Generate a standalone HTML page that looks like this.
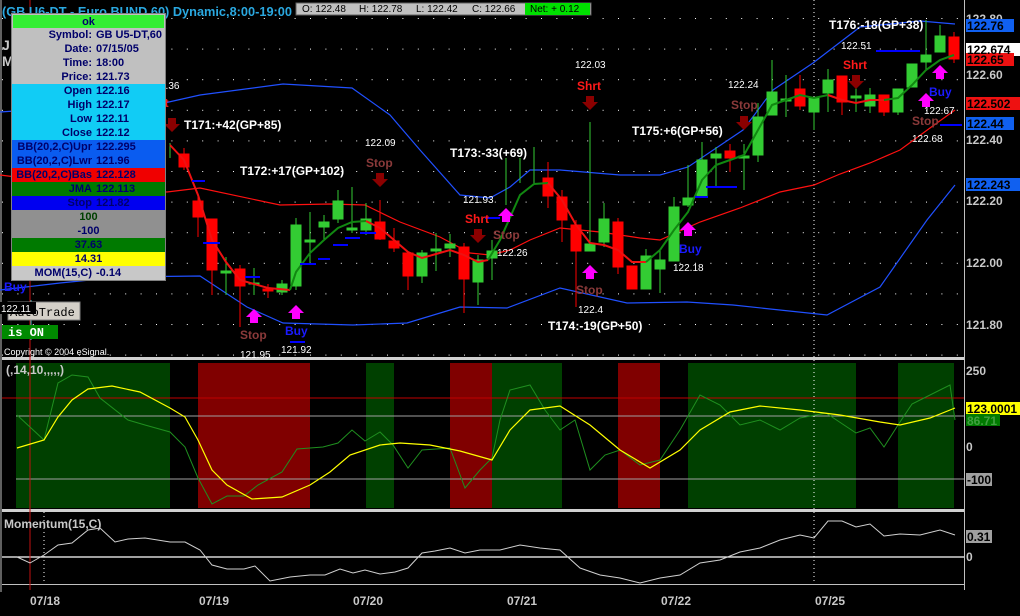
<!DOCTYPE html>
<html><head><meta charset="utf-8"><style>
html,body{margin:0;padding:0;background:#000;}
body{width:1020px;height:616px;position:relative;overflow:hidden;font-family:"Liberation Sans",sans-serif;}
svg{position:absolute;left:0;top:0;}
.box{position:absolute;left:11px;top:13px;width:155px;height:268px;background:#c0c0c0;border:1px solid #808080;box-sizing:border-box;}
.r{height:14px;line-height:14px;font-size:11px;font-weight:bold;color:#00006a;white-space:nowrap;display:flex;}
.r .a{width:80px;text-align:right;padding-right:4px;}
.r .c{width:100%;text-align:center;}
</style></head><body>
<svg width="1020" height="616" viewBox="0 0 1020 616" xmlns="http://www.w3.org/2000/svg" font-family="Liberation Sans, sans-serif">
<defs>
<pattern id="dots" x="2" y="18" width="15.4" height="30.6" patternUnits="userSpaceOnUse"><rect x="0" y="0" width="1" height="1" fill="#fff"/></pattern>
</defs>
<rect x="0" y="0" width="965" height="356" fill="url(#dots)"/>
<rect x="0" y="0" width="2" height="592" fill="#606060"/>
<rect x="964" y="0" width="1" height="590" fill="#c0c0c0"/>
<rect x="2" y="357" width="962" height="3" fill="#d0d0d0"/>
<rect x="2" y="509" width="962" height="3" fill="#d0d0d0"/>
<rect x="2" y="584" width="962" height="1" fill="#c0c0c0"/>
<rect x="16" y="363" width="154" height="145" fill="#004000"/>
<rect x="198" y="363" width="112" height="145" fill="#800000"/>
<rect x="366" y="363" width="28" height="145" fill="#004000"/>
<rect x="450" y="363" width="42" height="145" fill="#800000"/>
<rect x="492" y="363" width="70" height="145" fill="#004000"/>
<rect x="618" y="363" width="42" height="145" fill="#800000"/>
<rect x="688" y="363" width="168" height="145" fill="#004000"/>
<rect x="898" y="363" width="56" height="145" fill="#004000"/>
<line x1="2" y1="398" x2="964" y2="398" stroke="#c00000" stroke-width="1"/>
<line x1="16" y1="416" x2="964" y2="416" stroke="#a0a0a0" stroke-width="1"/>
<line x1="16" y1="479" x2="964" y2="479" stroke="#a0a0a0" stroke-width="1"/>
<line x1="2" y1="557" x2="964" y2="557" stroke="#fff" stroke-width="1.2"/>
<line x1="44" y1="512" x2="44" y2="584" stroke="#fff" stroke-dasharray="1,3"/>
<line x1="814" y1="0" x2="814" y2="584" stroke="#fff" stroke-dasharray="1,3"/>
<polyline fill="none" stroke="#2050ff" stroke-width="1.2" points="0,112 60,108 120,104 160,104 200,95 283,84 352,88 390,115 420,150 460,195 490,198 510,187 530,170 560,170 620,175 660,175 688,167 743,130 773,90 813,63 860,27 920,21 955,24"/>
<polyline fill="none" stroke="#ff1010" stroke-width="1.2" points="0,175 80,185 167,192 200,188 280,205 330,204 365,205 400,222 440,237 470,253 490,255 510,250 530,240 560,228 600,232 640,238 660,240 700,222 740,208 780,192 814,185 840,174 870,163 900,150 930,128 955,110"/>
<polyline fill="none" stroke="#2050ff" stroke-width="1.2" points="0,290 60,283 120,277 200,276 247,307 283,323 353,325 407,323 460,307 507,308 560,288 627,303 687,302 733,305 827,315 880,287 927,220 955,185"/>
<g stroke-width="1">
<g fill="#33cc33" stroke="#33cc33">
<line x1="170" y1="143" x2="170" y2="158"/>
<line x1="226" y1="257" x2="226" y2="295"/><rect x="221" y="271" width="10" height="2"/>
<line x1="254" y1="268" x2="254" y2="295"/><rect x="249" y="283" width="10" height="1"/>
<line x1="282" y1="280" x2="282" y2="295"/><rect x="277" y="284" width="10" height="8"/>
<line x1="296" y1="218" x2="296" y2="290"/><rect x="291" y="225" width="10" height="61"/>
<line x1="310" y1="212" x2="310" y2="263"/><rect x="305" y="240" width="10" height="2"/>
<line x1="324" y1="215" x2="324" y2="240"/><rect x="319" y="222" width="10" height="5"/>
<line x1="338" y1="190" x2="338" y2="223"/><rect x="333" y="201" width="10" height="18"/>
<line x1="352" y1="187" x2="352" y2="233"/><rect x="347" y="228" width="10" height="2"/>
<line x1="366" y1="203" x2="366" y2="235"/><rect x="361" y="219" width="10" height="11"/>
<line x1="422" y1="250" x2="422" y2="283"/><rect x="417" y="253" width="10" height="23"/>
<line x1="436" y1="233" x2="436" y2="271"/><rect x="431" y="249" width="10" height="2"/>
<line x1="450" y1="234" x2="450" y2="257"/><rect x="445" y="244" width="10" height="4"/>
<line x1="478" y1="255" x2="478" y2="305"/><rect x="473" y="260" width="10" height="22"/>
<line x1="492" y1="240" x2="492" y2="280"/><rect x="487" y="251" width="10" height="7"/>
<line x1="506" y1="158" x2="506" y2="205"/>
<line x1="520" y1="158" x2="520" y2="183"/>
<line x1="534" y1="147" x2="534" y2="183"/>
<line x1="590" y1="122" x2="590" y2="251"/><rect x="585" y="244" width="10" height="7"/>
<line x1="604" y1="203" x2="604" y2="247"/><rect x="599" y="219" width="10" height="23"/>
<line x1="646" y1="249" x2="646" y2="289"/><rect x="641" y="256" width="10" height="33"/>
<line x1="660" y1="249" x2="660" y2="293"/><rect x="655" y="260" width="10" height="9"/>
<line x1="674" y1="197" x2="674" y2="261"/><rect x="669" y="207" width="10" height="54"/>
<line x1="688" y1="165" x2="688" y2="207"/><rect x="683" y="198" width="10" height="7"/>
<line x1="702" y1="142" x2="702" y2="196"/><rect x="697" y="160" width="10" height="36"/>
<line x1="716" y1="147" x2="716" y2="187"/><rect x="711" y="154" width="10" height="4"/>
<line x1="744" y1="144" x2="744" y2="190"/><rect x="739" y="156" width="10" height="2"/>
<line x1="758" y1="103" x2="758" y2="162"/><rect x="753" y="117" width="10" height="38"/>
<line x1="772" y1="60" x2="772" y2="115"/><rect x="767" y="92" width="10" height="23"/>
<line x1="786" y1="75" x2="786" y2="117"/><rect x="781" y="99" width="10" height="2"/>
<line x1="814" y1="98" x2="814" y2="130"/><rect x="809" y="98" width="10" height="14"/>
<line x1="828" y1="69" x2="828" y2="112"/><rect x="823" y="80" width="10" height="13"/>
<line x1="856" y1="83" x2="856" y2="112"/><rect x="851" y="96" width="10" height="2"/>
<line x1="870" y1="88" x2="870" y2="113"/><rect x="865" y="95" width="10" height="11"/>
<line x1="898" y1="89" x2="898" y2="115"/><rect x="893" y="89" width="10" height="23"/>
<line x1="912" y1="64" x2="912" y2="87"/><rect x="907" y="64" width="10" height="23"/>
<line x1="926" y1="20" x2="926" y2="70"/><rect x="921" y="55" width="10" height="7"/>
<line x1="940" y1="25" x2="940" y2="52"/><rect x="935" y="36" width="10" height="16"/>
</g>
<g fill="#ff0000" stroke="#ff0000">
<line x1="184" y1="148" x2="184" y2="170"/><rect x="179" y="154" width="10" height="13"/>
<line x1="198" y1="195" x2="198" y2="237"/><rect x="193" y="201" width="10" height="16"/>
<line x1="212" y1="219" x2="212" y2="295"/><rect x="207" y="219" width="10" height="51"/>
<line x1="240" y1="265" x2="240" y2="327"/><rect x="235" y="269" width="10" height="17"/>
<line x1="268" y1="284" x2="268" y2="298"/><rect x="263" y="289" width="10" height="2"/>
<line x1="380" y1="200" x2="380" y2="240"/><rect x="375" y="222" width="10" height="17"/>
<line x1="394" y1="228" x2="394" y2="252"/><rect x="389" y="241" width="10" height="7"/>
<line x1="408" y1="253" x2="408" y2="290"/><rect x="403" y="253" width="10" height="23"/>
<line x1="464" y1="243" x2="464" y2="313"/><rect x="459" y="247" width="10" height="32"/>
<line x1="548" y1="162" x2="548" y2="208"/><rect x="543" y="178" width="10" height="18"/>
<line x1="562" y1="190" x2="562" y2="242"/><rect x="557" y="197" width="10" height="23"/>
<line x1="576" y1="220" x2="576" y2="307"/><rect x="571" y="225" width="10" height="26"/>
<line x1="618" y1="218" x2="618" y2="274"/><rect x="613" y="222" width="10" height="45"/>
<line x1="632" y1="266" x2="632" y2="289"/><rect x="627" y="266" width="10" height="23"/>
<line x1="730" y1="144" x2="730" y2="172"/><rect x="725" y="151" width="10" height="7"/>
<line x1="800" y1="75" x2="800" y2="110"/><rect x="795" y="89" width="10" height="17"/>
<line x1="842" y1="76" x2="842" y2="115"/><rect x="837" y="76" width="10" height="26"/>
<line x1="884" y1="95" x2="884" y2="116"/><rect x="879" y="95" width="10" height="17"/>
<line x1="954" y1="32" x2="954" y2="63"/><rect x="949" y="37" width="10" height="22"/>
</g>
</g>
<polyline fill="none" stroke="#ee1111" stroke-width="2" points="170,145 184,160 198,195 212,240 226,262 240,280 268,288 290,290"/>
<polyline fill="none" stroke="#118811" stroke-width="2" points="290,290 296,272 310,253 324,240 338,228 352,222 366,221"/>
<polyline fill="none" stroke="#ee1111" stroke-width="2" points="366,221 380,228 394,240 408,252 422,258 436,254 450,250 464,255 478,262 488,260"/>
<polyline fill="none" stroke="#118811" stroke-width="2" points="488,260 500,240 520,195 534,184 548,183"/>
<polyline fill="none" stroke="#ee1111" stroke-width="2" points="548,183 562,200 576,225 590,243 604,245 618,250 632,262 646,262"/>
<polyline fill="none" stroke="#118811" stroke-width="2" points="646,262 660,250 674,230 688,212 702,180 716,165 744,155 758,130 772,105 786,100 800,95 814,98 828,95"/>
<polyline fill="none" stroke="#ee1111" stroke-width="2" points="828,95 842,100 856,103 870,100 884,100"/>
<polyline fill="none" stroke="#118811" stroke-width="2" points="884,100 898,98 912,85 926,70 940,60 954,55"/>
<g stroke="#0000ff" stroke-width="2">
<line x1="192" y1="181" x2="205" y2="181"/><line x1="203" y1="243" x2="220" y2="243"/><line x1="245" y1="277" x2="260" y2="277"/>
<line x1="300" y1="264" x2="316" y2="264"/><line x1="318" y1="259" x2="330" y2="259"/><line x1="333" y1="245" x2="348" y2="245"/>
<line x1="345" y1="238" x2="360" y2="238"/><line x1="360" y1="233" x2="376" y2="233"/><line x1="290" y1="342" x2="305" y2="342"/>
<line x1="706" y1="187" x2="737" y2="187"/><line x1="695" y1="197" x2="708" y2="197"/><line x1="876" y1="51" x2="920" y2="51"/>
<line x1="940" y1="125" x2="962" y2="125"/><line x1="150" y1="121" x2="165" y2="121"/><line x1="485" y1="218" x2="500" y2="218"/>
</g>
<g fill="#ff00ff">
<polygon points="254,309 262,317 258,317 258,323 250,323 250,317 246,317"/>
<polygon points="296,305 304,313 300,313 300,319 292,319 292,313 288,313"/>
<polygon points="506,208 514,216 510,216 510,222 502,222 502,216 498,216"/>
<polygon points="590,265 598,273 594,273 594,279 586,279 586,273 582,273"/>
<polygon points="688,222 696,230 692,230 692,236 684,236 684,230 680,230"/>
<polygon points="940,65 948,73 944,73 944,79 936,79 936,73 932,73"/>
<polygon points="926,93 934,101 930,101 930,107 922,107 922,101 918,101"/>
</g>
<g fill="#8b0000">
<polygon points="168,118 176,118 176,124 180,124 172,132 164,124 168,124"/>
<polygon points="376,173 384,173 384,179 388,179 380,187 372,179 376,179"/>
<polygon points="474,229 482,229 482,235 486,235 478,243 470,235 474,235"/>
<polygon points="586,96 594,96 594,102 598,102 590,110 582,102 586,102"/>
<polygon points="740,116 748,116 748,122 752,122 744,130 736,122 740,122"/>
<polygon points="852,75 860,75 860,81 864,81 856,89 848,81 852,81"/>
</g>
<g font-weight="bold" font-size="12" fill="#fff">
<text x="184" y="129">T171:+42(GP+85)</text>
<text x="240" y="175">T172:+17(GP+102)</text>
<text x="450" y="157">T173:-33(+69)</text>
<text x="548" y="330">T174:-19(GP+50)</text>
<text x="632" y="135">T175:+6(GP+56)</text>
<text x="829" y="29">T176:-18(GP+38)</text>
</g>
<g font-size="10" fill="#fff">
<text x="160" y="89">2.36</text><text x="365" y="146">122.09</text><text x="463" y="203">121.93</text>
<text x="497" y="256">122.26</text><text x="575" y="68">122.03</text><text x="728" y="88">122.24</text>
<text x="841" y="49">122.51</text><text x="924" y="114">122.67</text><text x="912" y="142">122.68</text>
<text x="240" y="358">121.95</text><text x="281" y="353">121.92</text><text x="578" y="313">122.4</text>
<text x="673" y="271">122.18</text>
</g>
<g font-weight="bold" font-size="12">
<g fill="#8b3a3a"><text x="366" y="167">Stop</text><text x="493" y="239">Stop</text><text x="731" y="109">Stop</text><text x="912" y="125">Stop</text><text x="240" y="339">Stop</text><text x="576" y="294">Stop</text></g>
<g fill="#ff1a1a"><text x="160" y="107">rt</text><text x="465" y="223">Shrt</text><text x="577" y="90">Shrt</text><text x="843" y="69">Shrt</text></g>
<g fill="#1a1aff"><text x="929" y="96">Buy</text><text x="285" y="335">Buy</text><text x="679" y="253">Buy</text><text x="4" y="291">Buy</text></g>
</g>
<line x1="30" y1="0" x2="30" y2="590" stroke="#c01010" stroke-width="1"/>
<line x1="31" y1="300" x2="31" y2="340" stroke="#40c0c0" stroke-width="1"/>
<polyline fill="none" stroke="#1f8f1f" stroke-width="1" points="17,415 44,440 58,383 72,375 88,377 100,398 128,420 145,425 170,432 185,447 198,478 212,504 227,496 244,496 258,485 282,472 297,449 323,447 338,443 352,430 365,441 380,432 393,445 408,468 422,450 450,448 465,488 480,470 492,458 500,420 510,390 530,385 545,410 560,430 575,420 590,470 605,455 620,450 640,465 660,460 680,430 700,395 720,405 740,425 760,420 780,430 800,418 826,413 856,433 870,428 884,447 898,425 912,404 940,390 950,385 955,420"/>
<polyline fill="none" stroke="#ffff00" stroke-width="1.2" points="17,448 44,440 58,417 72,400 88,389 112,386 140,392 170,408 185,417 198,440 212,470 227,485 252,499 282,497 310,485 330,472 350,455 380,445 400,443 430,445 460,451 492,460 510,430 530,410 560,406 590,425 620,450 650,468 680,450 700,430 730,412 760,406 800,410 840,415 880,422 900,425 930,418 955,408"/>
<polyline fill="none" stroke="#d0d0d0" stroke-width="1" points="17,557 30,563 44,555 58,545 72,543 88,530 100,528 115,542 128,539 145,538 170,542 185,542 200,550 212,565 227,569 244,569 255,566 270,581 290,577 310,575 325,575 340,569 353,573 365,570 380,574 395,572 408,568 422,553 435,551 450,548 465,553 480,550 500,550 520,545 540,548 560,550 580,568 600,575 620,578 640,583 660,578 680,575 700,563 720,560 740,552 760,548 780,540 800,535 814,538 828,521 842,521 856,527 870,524 884,536 900,534 920,535 940,530 955,535"/>
<g font-weight="bold" font-size="12" fill="#c8c8c8">
<text x="6" y="374">(,14,10,,,,,)</text>
<text x="4" y="528">Momentum(15,C)</text>
<text x="30" y="605">07/18</text><text x="199" y="605">07/19</text><text x="353" y="605">07/20</text>
<text x="507" y="605">07/21</text><text x="661" y="605">07/22</text><text x="815" y="605">07/25</text>
</g>
<g font-weight="bold" font-size="12" fill="#c8c8c8">
<text x="966" y="23">122.80</text><text x="966" y="79">122.60</text><text x="966" y="144">122.40</text>
<text x="966" y="205">122.20</text><text x="966" y="267">122.00</text><text x="966" y="329">121.80</text>
<text x="966" y="375">250</text><text x="966" y="451">0</text><text x="966" y="561">0</text>
</g>
<rect x="966" y="19" width="48" height="13" fill="#1060f0"/>
<rect x="966" y="43" width="54" height="13" fill="#fff"/>
<rect x="966" y="53" width="48" height="13" fill="#ee1111"/>
<rect x="966" y="97" width="54" height="13" fill="#ee1111"/>
<rect x="966" y="117" width="48" height="13" fill="#1060f0"/>
<rect x="966" y="178" width="54" height="13" fill="#1060f0"/>
<rect x="966" y="402" width="54" height="13" fill="#ffff00"/>
<rect x="966" y="414" width="34" height="12" fill="#007a00"/>
<rect x="966" y="473" width="26" height="13" fill="#a0a0a0"/>
<rect x="966" y="530" width="26" height="13" fill="#a0a0a0"/>
<g font-weight="bold" font-size="12" fill="#000">
<text x="967" y="30">122.76</text><text x="967" y="54">122.674</text><text x="967" y="64">122.65</text>
<text x="967" y="108">122.502</text><text x="967" y="128">122.44</text><text x="967" y="189">122.243</text>
<text x="967" y="413">123.0001</text><text x="967" y="425" fill="#40a040">86.71</text>
<text x="967" y="484">-100</text><text x="967" y="541">0.31</text>
</g>
<text x="2" y="16" font-weight="bold" font-size="13" fill="#2aa8e0" textLength="290" lengthAdjust="spacingAndGlyphs">(GB U6-DT - Euro BUND 60) Dynamic,8:00-19:00</text>
<rect x="296" y="3" width="295" height="12" fill="#c0c0c0" stroke="#606060" stroke-width="1"/>
<rect x="525" y="3" width="65" height="12" fill="#00e000"/>
<g font-size="10" fill="#000"><text x="302" y="12">O: 122.48</text><text x="359" y="12">H: 122.78</text><text x="416" y="12">L: 122.42</text><text x="472" y="12">C: 122.66</text><text x="530" y="12">Net: + 0.12</text></g>
<text x="2" y="50" font-weight="bold" font-size="14" fill="#c8c8c8">J</text>
<text x="2" y="66" font-weight="bold" font-size="14" fill="#c8c8c8">M</text>
<rect x="8" y="302" width="72" height="18" fill="#d4d0c8" stroke="#808080"/>
<text x="10" y="316" font-family="Liberation Mono, monospace" font-size="12" fill="#000">AutoTrade</text>
<rect x="0" y="302" width="36" height="12" fill="#000"/>
<text x="1" y="312" font-size="10" fill="#fff">122.11</text>
<rect x="2" y="325" width="56" height="14" fill="#008a00"/>
<text x="8" y="336" font-family="Liberation Mono, monospace" font-weight="bold" font-size="12" fill="#fff">is ON</text>
<text x="4" y="355" font-size="9" fill="#fff">Copyright © 2004 eSignal.</text>
</svg>
<div class="box">
<div class="r" style="background:#33ee33;height:13px;margin:1px 1px 0 1px;"><span class="c">ok</span></div>
<div class="r"><span class="a">Symbol:</span>GB U5-DT,60</div>
<div class="r"><span class="a">Date:</span>07/15/05</div>
<div class="r"><span class="a">Time:</span>18:00</div>
<div class="r"><span class="a">Price:</span>121.73</div>
<div class="r" style="background:#11ccf5"><span class="a">Open</span>122.16</div>
<div class="r" style="background:#11ccf5"><span class="a">High</span>122.17</div>
<div class="r" style="background:#11ccf5"><span class="a">Low</span>122.11</div>
<div class="r" style="background:#11ccf5"><span class="a">Close</span>122.12</div>
<div class="r" style="background:#0a5cf0"><span class="a">BB(20,2,C)Upr</span>122.295</div>
<div class="r" style="background:#0a5cf0"><span class="a">BB(20,2,C)Lwr</span>121.96</div>
<div class="r" style="background:#f00000"><span class="a">BB(20,2,C)Bas</span>122.128</div>
<div class="r" style="background:#007a00"><span class="a">JMA</span>122.113</div>
<div class="r" style="background:#0000f0"><span class="a">Stop</span>121.82</div>
<div class="r" style="background:#909090;color:#004000"><span class="c">100</span></div>
<div class="r" style="background:#909090"><span class="c">-100</span></div>
<div class="r" style="background:#007a00"><span class="c">37.63</span></div>
<div class="r" style="background:#ffff00"><span class="c">14.31</span></div>
<div class="r" style="background:#c8c8c8"><span class="a">MOM(15,C)</span>-0.14</div>
</div>
</body></html>
